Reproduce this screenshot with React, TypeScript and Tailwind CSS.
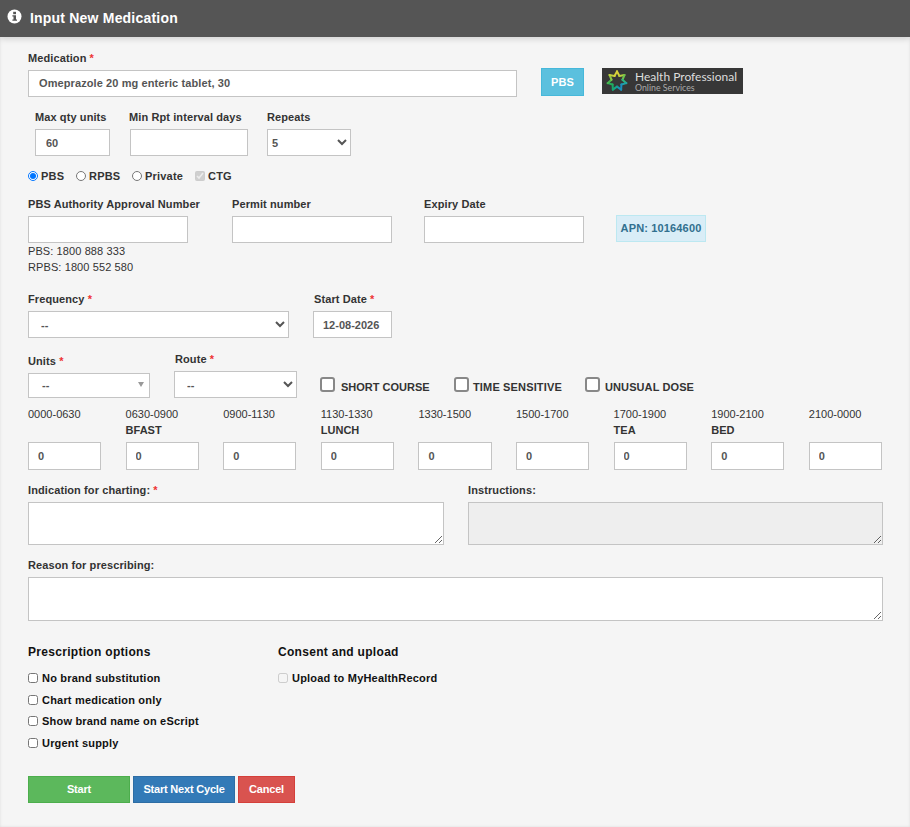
const inputCls = "block border border-[#c4c4c4] bg-white h-[27px] text-[11px] font-bold text-[#555] outline-none";

function Req() {
  return <span className="text-[#e33]"> *</span>;
}

function Label({ children, className = "" }: { children: React.ReactNode; className?: string }) {
  return <div className={"text-[11px] font-bold text-[#333] tracking-[0.1px] leading-[14px] " + className}>{children}</div>;
}

const slots = [
  ["0000-0630", ""],
  ["0630-0900", "BFAST"],
  ["0900-1130", ""],
  ["1130-1330", "LUNCH"],
  ["1330-1500", ""],
  ["1500-1700", ""],
  ["1700-1900", "TEA"],
  ["1900-2100", "BED"],
  ["2100-0000", ""],
];

function Radio({ label, checked, className = "" }: { label: string; checked?: boolean; className?: string }) {
  return (
    <label className={"flex items-center " + className}>
      <input type="radio" name="kind" defaultChecked={checked} className="m-0 w-[10px] h-[10px] mr-[3px]" />
      <span className="text-[11px] font-bold text-[#333] tracking-[0.2px]">{label}</span>
    </label>
  );
}

function BigCheck({ label, gap, tracking, className = "" }: { label: string; gap: string; tracking: string; className?: string }) {
  return (
    <div className={"flex items-center " + className}>
      <span className={"w-[15px] h-[15px] border-2 border-[#888] rounded-[3px] bg-white -mt-[5px] " + gap} />
      <span className={"text-[11px] font-bold text-[#333] " + tracking}>{label}</span>
    </div>
  );
}

function Opt({ label, className = "" }: { label: string; className?: string }) {
  return (
    <label className={"flex items-center " + className}>
      <input type="checkbox" className="m-0 mr-[4px] w-[10px] h-[10px]" />
      <span className="text-[11px] font-bold text-[#111] tracking-[0.2px] leading-[14px]">{label}</span>
    </label>
  );
}

const starColors = ["#d8d23a", "#b4cf3e", "#6cc24f", "#2fb57f", "#1fa3a8", "#1a8fc0", "#1a93b8", "#16a58c", "#17a86c", "#24ad5a", "#4ab84f", "#8cc645", "#c0cf3c", "#d8d23a"];

function HealthLogo() {
  // federation star outline, each edge gets its own colour
  const pts = Array.from({ length: 14 }, (_, i) => {
    const a = (i * Math.PI) / 7 - Math.PI / 2;
    const r = i % 2 === 0 ? 9.6 : 5.6;
    return [11 + r * Math.cos(a), 11 + r * Math.sin(a)];
  });
  return (
    <div className="w-[141px] h-[26px] bg-[#373737] flex items-center ml-[18px] pl-[4px]">
      <svg width="22" height="22" viewBox="0 0 22 22" fill="none" strokeWidth="2" strokeLinecap="round" className="mr-[7px] shrink-0">
        {pts.map((p, i) => {
          const q = pts[(i + 1) % 14];
          return <line key={i} x1={p[0]} y1={p[1]} x2={q[0]} y2={q[1]} stroke={starColors[i]} />;
        })}
      </svg>
      <div className="flex flex-col whitespace-nowrap font-['Lato',sans-serif]">
        <div className="text-[12px] leading-[12px] text-[#ddd]">Health Professional</div>
        <div className="text-[8.8px] leading-[9px] text-[#aaa]">Online Services</div>
      </div>
    </div>
  );
}

export default function App() {
  return (
    <div className="relative w-[910px] h-[827px] bg-[#f5f5f5] overflow-hidden font-['Liberation_Sans',Arial,sans-serif] shadow-[inset_0_0_3px_rgba(0,0,0,0.1)]">
      <div className="h-[37px] bg-[#555] flex items-center pl-[7px] shadow-[0_2px_6px_rgba(0,0,0,0.15)]">
        <svg width="15" height="15" viewBox="0 0 15 15" className="mb-[4px]">
          <circle cx="7.5" cy="7.5" r="7" fill="#fff" />
          <rect x="6.2" y="2.8" width="2.8" height="2.4" fill="#555" />
          <path d="M5.4 6.2h3.6v4.2h1v1.4H5.4v-1.4h1.1V7.6H5.4z" fill="#555" />
        </svg>
        <span className="ml-[8px] text-[14px] font-bold text-white tracking-[0.2px]">Input New Medication</span>
      </div>

      <div className="px-[28px]">
        <Label className="mt-[14px]">Medication<Req /></Label>
        <div className="flex mt-[5px] h-[27px] items-start">
          <input readOnly value="Omeprazole 20 mg enteric tablet, 30" className={inputCls + " w-[489px] pl-[10px] pb-[2px] tracking-[0.1px]"} />
          <div className="ml-[24px] -mt-[2px] w-[43px] h-[28px] bg-[#5bc0de] border border-[#46b8da] text-white text-[11px] font-bold tracking-[0.2px] flex items-center justify-center">PBS</div>
          <div className="-mt-[2px]"><HealthLogo /></div>
        </div>

        <div className="flex mt-[13px] ml-[7px]">
          <div className="w-[95px]">
            <Label>Max qty units</Label>
            <input readOnly value="60" className={inputCls + " w-[75px] mt-[5px] pl-[10px]"} />
          </div>
          <div className="w-[137px]">
            <Label className="-ml-[1px]">Min Rpt interval days</Label>
            <input className={inputCls + " w-[118px] mt-[5px]"} />
          </div>
          <div>
            <Label>Repeats</Label>
            <select className={inputCls + " w-[84px] mt-[5px]"}><option>5</option></select>
          </div>
        </div>

        <div className="flex items-center mt-[13px] h-[14px]">
          <Radio label="PBS" checked className="w-[48px]" />
          <Radio label="RPBS" className="w-[56px]" />
          <Radio label="Private" className="w-[63px]" />
          <input type="checkbox" disabled defaultChecked className="m-0 w-[10px] h-[10px] mr-[3px]" />
          <span className="text-[11px] font-bold text-[#333] tracking-[0.2px]">CTG</span>
        </div>

        <div className="flex mt-[14px] h-[80px]">
          <div className="w-[204px]">
            <Label>PBS Authority Approval Number</Label>
            <input className={inputCls + " w-[160px] mt-[5px]"} />
            <div className="text-[11px] text-[#333] tracking-[0.1px] leading-[16px]">PBS: 1800 888 333<br />RPBS: 1800 552 580</div>
          </div>
          <div className="w-[192px]">
            <Label>Permit number</Label>
            <input className={inputCls + " w-[160px] mt-[5px]"} />
          </div>
          <div className="w-[192px]">
            <Label>Expiry Date</Label>
            <input className={inputCls + " w-[160px] mt-[5px]"} />
          </div>
          <div className="mt-[18px] w-[90px] h-[27px] bg-[#d9edf7] border border-[#bce8f1] text-[#31708f] text-[11px] font-bold tracking-[0.15px] flex items-center justify-center">APN: 10164600</div>
        </div>

        <div className="flex mt-[15px]">
          <div className="w-[285px]">
            <Label>Frequency<Req /></Label>
            <select className={inputCls + " w-[261px] mt-[5px] pl-[8px]"}><option>--</option></select>
          </div>
          <div>
            <Label className="ml-[1px]">Start Date<Req /></Label>
            <input readOnly value="12-08-2026" className={inputCls + " w-[79px] mt-[5px] pl-[9px]"} />
          </div>
        </div>

        <div className="flex mt-[14px] h-[41px]">
          <div className="w-[146px] pt-[2px]">
            <Label>Units<Req /></Label>
            <div className="relative w-[122px] h-[25px] mt-[5px] border border-[#c4c4c4] bg-white text-[11px] font-bold text-[#555] pl-[13px] leading-[23px]">
              --
              <span className="absolute right-[5px] top-[8px] w-0 h-0 border-x-[3.5px] border-x-transparent border-t-[5px] border-t-[#999]" />
            </div>
          </div>
          <div className="w-[146px]">
            <Label className="ml-[1px]">Route<Req /></Label>
            <select className={inputCls + " w-[123px] mt-[5px] pl-[8px]"}><option>--</option></select>
          </div>
          <div className="flex items-center mt-[25px] h-[20px]">
            <BigCheck label="SHORT COURSE" gap="mr-[6px]" tracking="" className="w-[134px]" />
            <BigCheck label="TIME SENSITIVE" gap="mr-[4px]" tracking="tracking-[0.15px]" className="w-[131px]" />
            <BigCheck label="UNUSUAL DOSE" gap="mr-[5px]" tracking="tracking-[0.1px]" />
          </div>
        </div>

        <div className="grid grid-cols-9 gap-x-[24.4px] w-[854px] mt-[14px]">
          {slots.map(([time, meal]) => (
            <div key={time}>
              <div className="text-[11px] text-[#333] leading-[14px]">{time}</div>
              <div className="text-[11px] font-bold text-[#333] leading-[14px] mt-[2px] h-[14px]">{meal}</div>
              <input readOnly value="0" className={inputCls + " w-full mt-[5px] h-[28px] pl-[9px]"} />
            </div>
          ))}
        </div>

        <div className="flex mt-[13px] gap-x-[24px]">
          <div className="w-[416px] shrink-0">
            <Label>Indication for charting:<Req /></Label>
            <textarea className="block w-full h-[43px] mt-[5px] border border-[#c4c4c4] bg-white outline-none" />
          </div>
          <div className="w-[415px] shrink-0">
            <Label>Instructions:</Label>
            <textarea disabled className="block w-full h-[43px] mt-[5px] border border-[#c4c4c4] bg-[#eee] outline-none" />
          </div>
        </div>

        <Label className="mt-[13px]">Reason for prescribing:</Label>
        <textarea className="block w-[855px] h-[44px] mt-[5px] border border-[#c4c4c4] bg-white outline-none" />

        <div className="flex mt-[24px]">
          <div className="w-[250px]">
            <div className="text-[12px] font-bold text-[#111] tracking-[0.3px] leading-[14px]">Prescription options</div>
            <Opt label="No brand substitution" className="mt-[12px]" />
            <Opt label="Chart medication only" className="mt-[8px]" />
            <Opt label="Show brand name on eScript" className="mt-[7px]" />
            <Opt label="Urgent supply" className="mt-[8px]" />
          </div>
          <div>
            <div className="text-[12px] font-bold text-[#111] tracking-[0.3px] leading-[14px]">Consent and upload</div>
            <label className="flex items-center mt-[12px]">
              <input type="checkbox" disabled className="m-0 mr-[4px] w-[10px] h-[10px]" />
              <span className="text-[11px] font-bold text-[#111] tracking-[0.2px] leading-[14px]">Upload to MyHealthRecord</span>
            </label>
          </div>
        </div>

        <div className="flex gap-x-[3px] mt-[26px] text-white text-[11px] font-bold tracking-[-0.2px]">
          <button className="w-[102px] h-[27px] bg-[#5cb85c] border border-[#4cae4c]">Start</button>
          <button className="w-[102px] h-[27px] bg-[#337ab7] border border-[#2e6da4]">Start Next Cycle</button>
          <button className="w-[57px] h-[27px] bg-[#d9534f] border border-[#d43f3a]">Cancel</button>
        </div>
      </div>
    </div>
  );
}
